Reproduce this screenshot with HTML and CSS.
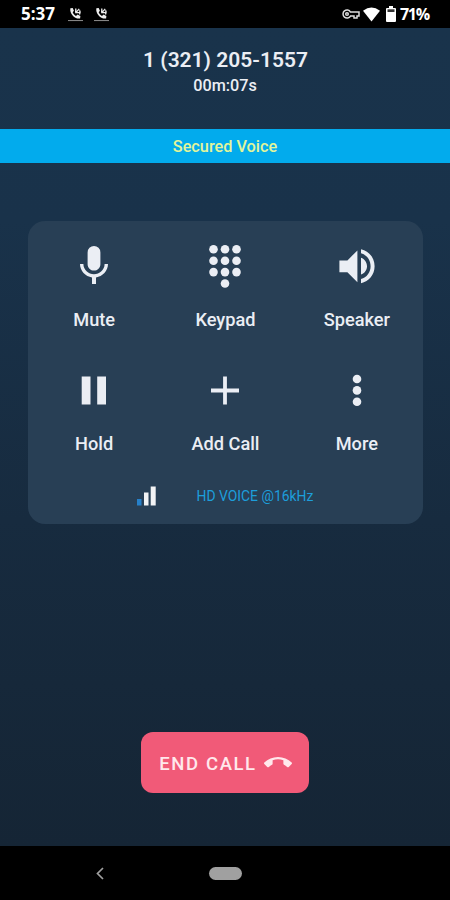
FILE: index.html
```html
<!DOCTYPE html>
<html lang="en">
<head>
<meta charset="utf-8">
<title>Call</title>
<link rel="stylesheet" href="styles.css">
</head>
<body>
<div class="phone">
  <header class="status">
    <span class="clock">5:37</span>
    <svg class="missed" viewBox="0 0 16 16"><path d="M2.500 1.200 5 1l1.300 3-1.300 1.500c.8 2 2 3.200 3.500 4L10.200 8l3 1.500-.3 2.700C7 13 1.500 7 2.500 1.200z"/><path class="thin" d="M8.300 1.500v4.500h4M8.300 6l3.700-4M12.300 3.500c.8 1 .8 2.500 0 4.500"/><path class="line" d="M0 14h16v1H0z"/></svg>
    <svg class="missed" viewBox="0 0 16 16"><path d="M2.500 1.200 5 1l1.300 3-1.300 1.500c.8 2 2 3.200 3.500 4L10.200 8l3 1.500-.3 2.700C7 13 1.500 7 2.500 1.200z"/><path class="thin" d="M8.300 1.500v4.500h4M8.300 6l3.700-4M12.300 3.500c.8 1 .8 2.500 0 4.500"/><path class="line" d="M0 14h16v1H0z"/></svg>
    <span class="space"></span>
    <svg class="key" viewBox="0 0 18 10"><path d="M8.500 3A4 4 0 1 0 8.500 7H12v2h3V7h2V3z"/><circle cx="5" cy="5" r="1.300"/></svg>
    <svg class="wifi" viewBox="0 0 18 15"><path d="M0 3.500Q9-3.500 18 3.500L9 15z"/></svg>
    <svg class="battery" viewBox="0 0 10 16"><path d="M3 0h4v2h2q1 0 1 1v12q0 1-1 1H1q-1 0-1-1V3q0-1 1-1h2z"/><path class="gap" d="M1.500 3.300h7v2.700h-7z"/></svg>
    <span class="percent">71%</span>
  </header>
  <section class="caller">
    <div class="number">1 (321) 205-1557</div>
    <div class="timer">00m:07s</div>
  </section>
  <div class="secure">Secured Voice</div>
  <main class="content">
    <section class="panel">
      <div class="controls">
        <div class="control"><svg viewBox="0 0 24 24"><path d="M12 14.300c1.800 0 3.200-1.400 3.200-3.200V5.200a3.200 3.200 0 0 0-6.400 0v5.900c0 1.800 1.400 3.200 3.200 3.200zM17.300 11c0 3-2.540 5.100-5.300 5.100S6.700 14 6.700 11H5c0 3.410 2.720 6.230 6 6.720V21h2v-3.280c3.280-.48 6-3.300 6-6.720z"/></svg><span>Mute</span></div>
        <div class="control"><svg viewBox="0 0 48 48"><circle cx="12.500" cy="7.300" r="4.300"/><circle cx="24" cy="7.300" r="4.300"/><circle cx="35.500" cy="7.300" r="4.300"/><circle cx="12.500" cy="18.700" r="4.300"/><circle cx="24" cy="18.700" r="4.300"/><circle cx="35.500" cy="18.700" r="4.300"/><circle cx="12.500" cy="30.100" r="4.300"/><circle cx="24" cy="30.100" r="4.300"/><circle cx="35.500" cy="30.100" r="4.300"/><circle cx="24" cy="41.500" r="4.300"/></svg><span>Keypad</span></div>
        <div class="control"><svg viewBox="0 0 24 24"><path d="M3.200 9.200v5.900h4l5 5V4.200l-5 5zM17 12.100c0-1.900-1.200-3.500-3-4.200v8.400c1.800-.7 3-2.300 3-4.200zM14 3.600v2.060c2.890.8 4.800 3.400 4.800 6.440s-1.910 5.640-4.800 6.440v2.060c4.010-.88 6.800-4.300 6.800-8.500S18.010 4.480 14 3.600z"/></svg><span>Speaker</span></div>
        <div class="control"><svg viewBox="0 0 48 48"><path d="M11.700 10.500h8.800v28h-8.800zM27.200 10.500H36v28h-8.800z"/></svg><span>Hold</span></div>
        <div class="control"><svg viewBox="0 0 48 48"><path d="M22.100 10.500h3.800v12.100H38v3.800H25.900v12.100h-3.800V26.400H10v-3.800h12.100z"/></svg><span>Add Call</span></div>
        <div class="control"><svg viewBox="0 0 48 48"><circle cx="24" cy="13" r="4.300"/><circle cx="24" cy="24.400" r="4.300"/><circle cx="24" cy="35.800" r="4.300"/></svg><span>More</span></div>
      </div>
      <div class="quality">
        <svg class="signal" viewBox="0 0 19 20"><path class="low" d="M0 13h4.500v6.500H0z"/><path d="M7 6.500h4.500v13H7zM13.700.5h5v19h-5z"/></svg>
        <span>HD VOICE @16kHz</span>
      </div>
    </section>
    <button class="end" type="button"><span>END CALL</span><svg viewBox="0 3 24 20"><path d="M12 9c-1.600 0-3.150.25-4.600.72v3.100c0 .39-.23.74-.56.900-.98.490-1.870 1.120-2.660 1.850-.18.180-.43.280-.7.280-.28 0-.53-.11-.71-.29L.29 13.080a.99.990 0 0 1-.29-.7c0-.28.110-.53.290-.71C3.340 8.780 7.460 7 12 7s8.660 1.780 11.710 4.670c.18.180.29.430.29.710s-.11.530-.29.710l-2.480 2.480c-.18.180-.43.290-.71.290-.27 0-.52-.11-.7-.28a11.300 11.300 0 0 0-2.660-1.850.99.990 0 0 1-.56-.9v-3.100C15.150 9.250 13.600 9 12 9z"/></svg></button>
  </main>
  <nav class="nav">
    <svg class="back" viewBox="0 0 8 13"><path d="M7 1 1.500 6.500 7 12"/></svg>
    <span class="home"></span>
  </nav>
</div>
</body>
</html>
```
FILE: styles.css
```css
* { box-sizing: border-box; }
body { margin: 0; font-family: Roboto, sans-serif; font-weight: 500; color: #ebeef4; }
svg { display: block; fill: currentColor; flex: none; }
.phone { width: 450px; height: 900px; display: flex; flex-direction: column; background: linear-gradient(#19334b 28px, #19324a 220px, #172b3f 520px, #152535 846px); overflow: hidden; }
.status { height: 28px; flex: none; background: #000; color: #fff; display: flex; align-items: center; padding: 0 20px 0 21px; font-weight: 700; line-height: 28px; }
.clock { width: 47px; font-family: "Open Sans", sans-serif; font-size: 17px; }
.missed { width: 15px; height: 15px; margin-right: 11px; color: #eee; }
.missed .line { fill: #999; }
.thin { fill: none; stroke: currentColor; stroke-width: 1.400; }
.space { flex: 1; }
.key { width: 18px; height: 10px; margin-right: 3px; fill: none; stroke: #ddd; stroke-width: 1.500; }
.wifi { width: 17px; height: 15px; margin-right: 6px; }
.battery { width: 10px; height: 16px; margin-right: 4px; }
.battery .gap { fill: #333; }
.percent { width: 30px; white-space: nowrap; font-family: "Open Sans", sans-serif; font-size: 16px; letter-spacing: -1.300px; }
.caller { height: 101px; flex: none; padding-top: 19px; text-align: center; }
.number { font-size: 21px; font-weight: 600; letter-spacing: 0; padding-left: 1px; line-height: 27px; }
.timer { font-size: 16.200px; line-height: 23px; }
.secure { height: 34px; flex: none; background: #02abed; color: #e2f59a; text-align: center; font-size: 16.300px; line-height: 35px; }
.content { flex: 1; display: flex; flex-direction: column; align-items: center; padding-top: 58px; }
.panel { width: 395px; height: 303px; border-radius: 17px; background: #283f55; padding-top: 21px; }
.controls { display: grid; grid-template-columns: repeat(3, 1fr); grid-auto-rows: 124px; font-size: 18.200px; line-height: 24px; padding-left: 1px; }
.control { display: flex; flex-direction: column; align-items: center; gap: 18px; }
.control svg { width: 48px; height: 48px; }
.quality { display: flex; align-items: center; padding-left: 109px; gap: 41px; height: 12px; color: #1d9edb; font-size: 13.900px; font-weight: 400; }
.signal { width: 19px; height: 20px; color: #f2f3f5; }
.signal .low { fill: #2680c9; }
.end { display: flex; align-items: center; justify-content: center; gap: 7px; width: 168px; height: 61px; margin-top: 208px; border: 0; border-radius: 12px; padding: 2px 0 0 1px; background: #f15a78; color: #ffe8ec; font: 500 18.500px/24px Roboto, sans-serif; letter-spacing: 1.600px; }
.end svg { width: 28px; height: 24px; }
.nav { height: 54px; flex: none; background: #000; display: flex; align-items: center; padding-left: 96px; gap: 105px; }
.back { width: 8px; height: 13px; fill: none; stroke: #a0a0a0; stroke-width: 1.700; }
.home { width: 33px; height: 13px; border-radius: 7px; background: #a0a0a0; }
```
